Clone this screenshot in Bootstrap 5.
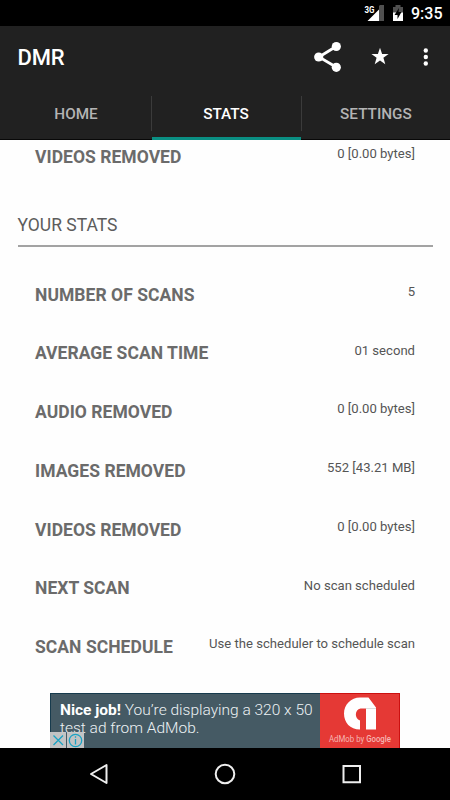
<!DOCTYPE html>
<html lang="en">
<head>
<meta charset="utf-8">
<meta name="viewport" content="width=device-width, initial-scale=1">
<title>DMR</title>
<link href="https://cdn.jsdelivr.net/npm/bootstrap@5.3.0/dist/css/bootstrap.min.css" rel="stylesheet">
<style>
body{font-family:Roboto,"Liberation Sans",sans-serif;height:800px;background:#fefefe;overflow:hidden}
svg{display:block;flex:none}
.status{height:26px;padding-right:8px;font-size:16px;font-weight:500;line-height:28px}
.clock{width:31px;white-space:nowrap}
.appbar{height:63px;background:#212121;padding-left:17.5px}
.app-title{font-size:22px;font-weight:500;line-height:26px;letter-spacing:-.2px}
.tabs{height:51px;background:#212121;border-bottom:1px solid #080808}
.tab-item{font-size:15.3px;font-weight:500;color:#b4b4b4;text-decoration:none;height:50px;padding-left:2px}
.tab-item+.tab-item{background:linear-gradient(#3b3b3b,#3b3b3b) 1px 7px/1px 35px no-repeat}
.tab-item.current{color:#fff}
.tab-item.current::after{content:"";position:absolute;left:2px;right:-1px;bottom:-1px;height:3px;background:#0a8f83}
.scroller{height:608px}
.stat{height:58.75px;padding:19px 35px 0}
.stat-cut{height:46.5px;padding-top:7px}
.stat-label{font-size:17.5px;font-weight:700;line-height:20px;color:#6b6b6b;letter-spacing:.04px}
.stat-value{font-size:13.1px;line-height:16px;color:#555;margin-top:-.7px}
.heading{margin:26px 17px 0 17.5px;height:34px;border-bottom:2px solid #a3a3a3;font-size:17.5px;font-weight:400;line-height:24px;color:#5c5c5c}
.list-rows{padding-top:19px}
.ad{width:350px;height:55px;background:#455a64;border-top:1px solid #173b4d;border-left:1px solid #173b4d;margin-top:16px}
.ad-copy{width:269px;font-size:15.5px;line-height:18.500px;font-weight:300;color:#edf2f4;padding:7px 0 0 9px;white-space:nowrap}
.ad-copy b{font-weight:700;color:#fff}
.ad-logo{width:80px;background:#e53935;border-right:1px solid #cc1010;margin-top:-1px;border-top:1px solid #cc1010}
.ad-controls{left:-1px;bottom:0;opacity:.93}
.navkeys{height:52px}
</style>
<script src="https://cdn.jsdelivr.net/npm/bootstrap@5.3.0/dist/js/bootstrap.bundle.min.js"></script>
</head>
<body class="d-flex flex-column">
<div class="status bg-black text-white d-flex justify-content-end">
  <svg width="50" height="26" viewBox="361 0 50 26">
    <path d="M380 5h4v16h-5V6z" fill="#505050"/>
    <path d="M367.500 21 379 9.500V21z" fill="#fff"/>
    <text x="364.500" y="12.500" font-size="9.500" font-weight="700" fill="#fff" stroke="#000" stroke-width="1.500" paint-order="stroke" textLength="10" lengthAdjust="spacingAndGlyphs">3G</text>
    <path d="M393 7h2.500V5h5v2h2.500v14h-10z" fill="#505050"/>
    <path d="M393 12.500h10V21h-10z" fill="#fff"/>
    <path d="m399 8-4.500 7h3v4l4-7H398.500z" fill="#000"/>
  </svg>
  <div class="clock">9:35</div>
</div>
<header class="appbar d-flex align-items-center text-white">
  <div class="app-title flex-grow-1">DMR</div>
  <svg width="140" height="63" viewBox="310 26 140 63" fill="#fff" role="img" aria-label="Share, favourite, more">
    <path d="M336 46.500 319 57l17 10" fill="none" stroke="#fff" stroke-width="2.800"/>
    <circle cx="336.300" cy="46.500" r="4.600"/><circle cx="318.700" cy="57" r="4.600"/><circle cx="336.300" cy="67.300" r="4.600"/>
    <path d="m380 47.700 2.100 6.200h6.500l-5.200 3.900 1.900 6.500-5.300-3.900-5.300 3.900 1.900-6.500-5.200-3.900h6.500z"/>
    <circle cx="425.800" cy="50.500" r="2.200"/><circle cx="425.800" cy="57" r="2.200"/><circle cx="425.800" cy="63.500" r="2.200"/>
  </svg>
</header>
<nav class="tabs row g-0">
  <a class="tab-item col-4 d-flex align-items-center justify-content-center" href="#">HOME</a>
  <a class="tab-item current position-relative col-4 d-flex align-items-center justify-content-center" href="#">STATS</a>
  <a class="tab-item col-4 d-flex align-items-center justify-content-center" href="#">SETTINGS</a>
</nav>
<main class="scroller overflow-hidden">
  <div class="stat stat-cut d-flex justify-content-between"><div class="stat-label">VIDEOS REMOVED</div><div class="stat-value">0 [0.00 bytes]</div></div>
  <h2 class="heading">YOUR STATS</h2>
  <div class="list-rows">
    <div class="stat d-flex justify-content-between"><div class="stat-label">NUMBER OF SCANS</div><div class="stat-value">5</div></div>
    <div class="stat d-flex justify-content-between"><div class="stat-label">AVERAGE SCAN TIME</div><div class="stat-value">01 second</div></div>
    <div class="stat d-flex justify-content-between"><div class="stat-label">AUDIO REMOVED</div><div class="stat-value">0 [0.00 bytes]</div></div>
    <div class="stat d-flex justify-content-between"><div class="stat-label">IMAGES REMOVED</div><div class="stat-value">552 [43.21 MB]</div></div>
    <div class="stat d-flex justify-content-between"><div class="stat-label">VIDEOS REMOVED</div><div class="stat-value">0 [0.00 bytes]</div></div>
    <div class="stat d-flex justify-content-between"><div class="stat-label">NEXT SCAN</div><div class="stat-value">No scan scheduled</div></div>
    <div class="stat d-flex justify-content-between"><div class="stat-label">SCAN SCHEDULE</div><div class="stat-value">Use the scheduler to schedule scan</div></div>
  </div>
  <div class="ad mx-auto d-flex position-relative">
    <div class="ad-copy"><b>Nice job!</b> You’re displaying a 320 x 50<br>test ad from AdMob.</div>
    <div class="ad-logo">
      <svg width="80" height="54" viewBox="0 0 80 54">
        <path d="M40 3.500h8.500L56 13.500v22H46V14.500h-5.500a6.300 6.300 0 0 0-.5 12v9C30 35.500 24 28.500 24 19.500 24 10.500 31 3.500 40 3.500z" fill="#fff"/>
        <path d="M46 14.500h10" stroke="#ddd" stroke-width="1"/>
        <text x="9" y="47.500" font-size="8.500" fill="#f6b5b3" textLength="62" lengthAdjust="spacingAndGlyphs">AdMob by <tspan font-weight="500">Google</tspan></text>
      </svg>
    </div>
    <div class="ad-controls position-absolute">
      <svg width="34" height="16" viewBox="0 0 34 16" fill="none" stroke="#16a8cc" stroke-width="1.300">
        <path d="M0 0h16v16H0zM17 0h17v16H17z" fill="#ccc" stroke="none"/>
        <path d="m3.500 3.500 9.500 9.500M13 3.500 3.500 13"/>
        <circle cx="25.500" cy="8.500" r="6.200"/><path d="M25.500 7v5.500M25.500 4.300v1.500"/>
      </svg>
    </div>
  </div>
</main>
<footer class="navkeys bg-black">
  <svg width="450" height="52" viewBox="0 748 450 52" fill="none" stroke="#eee" stroke-width="2">
    <path d="M106.500 765v18L91 774z" stroke-linejoin="round"/>
    <circle cx="225" cy="774" r="9.300"/>
    <path d="M343.500 766h16.500v16.300h-16.500z"/>
  </svg>
</footer>
</body>
</html>
